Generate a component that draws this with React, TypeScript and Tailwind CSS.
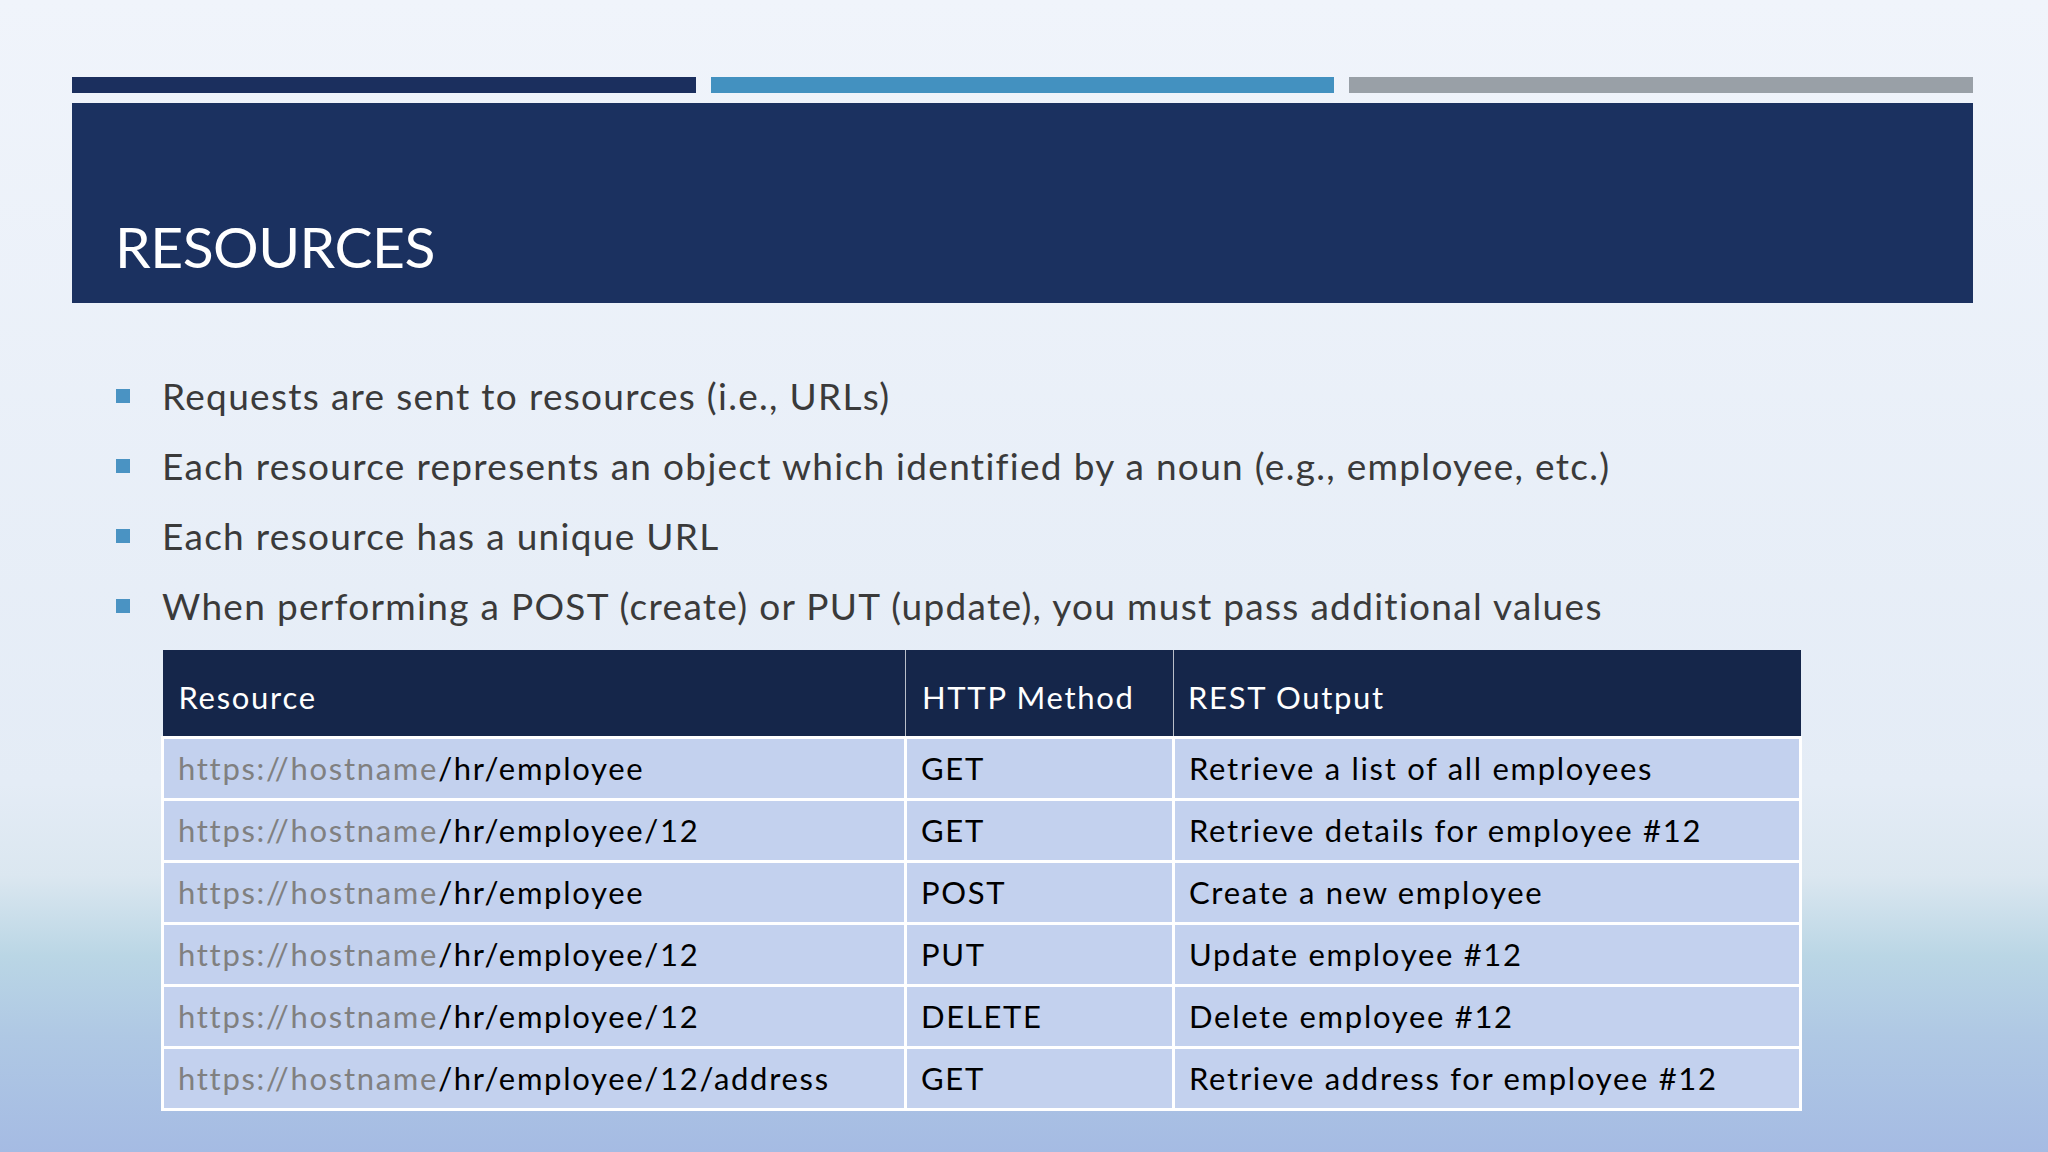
import React from "react";

const bullets = [
  "Requests are sent to resources (i.e., URLs)",
  "Each resource represents an object which identified by a noun (e.g., employee, etc.)",
  "Each resource has a unique URL",
  "When performing a POST (create) or PUT (update), you must pass additional values",
];

const rows = [
  { path: "/hr/employee", method: "GET", output: "Retrieve a list of all employees" },
  { path: "/hr/employee/12", method: "GET", output: "Retrieve details for employee #12" },
  { path: "/hr/employee", method: "POST", output: "Create a new employee" },
  { path: "/hr/employee/12", method: "PUT", output: "Update employee #12" },
  { path: "/hr/employee/12", method: "DELETE", output: "Delete employee #12" },
  { path: "/hr/employee/12/address", method: "GET", output: "Retrieve address for employee #12" },
];

const App: React.FC = () => {
  return (
    <div className="w-[2048px] h-[1152px] overflow-hidden font-['Lato',sans-serif] bg-[linear-gradient(180deg,#f0f4fb_0%,#e4ecf6_68%,#dbe7f0_76%,#bad6e5_83%,#afc8e4_90%,#a5bbe3_100%)]">
      <div className="ml-[72px] w-[1901px] pt-[77px]">
        {/* top accent bars */}
        <div className="flex gap-[15px] h-[16px]">
          <div className="flex-1 bg-[#1b2f5e]" />
          <div className="flex-1 bg-[#4391c0]" />
          <div className="flex-1 bg-[#99a0a7]" />
        </div>

        {/* title */}
        <div className="mt-[10px] h-[200px] bg-[#1b3160] flex items-end pl-[43px] pb-[28px]">
          <h1 className="text-white text-[57px] leading-none tracking-[-0.5px]">RESOURCES</h1>
        </div>

        {/* bullets */}
        <ul className="mt-[58px] ml-[44px]">
          {bullets.map((b) => (
            <li key={b} className="flex items-center h-[70px]">
              <span className="w-[14px] h-[14px] bg-[#4a93c3] mr-[32px] shrink-0" />
              <span className="text-[#3a3a3a] text-[37px] tracking-[1.3px] whitespace-nowrap">{b}</span>
            </li>
          ))}
        </ul>

        {/* table */}
        <table className="mt-[9px] ml-[89px] w-[1638px] border-collapse text-[31px] tracking-[1.7px] table-fixed">
          <colgroup>
            <col className="w-[743px]" />
            <col className="w-[268px]" />
            <col className="w-[627px]" />
          </colgroup>
          <thead>
            <tr className="h-[87px] bg-[#15264a] text-white">
              <th className="text-left font-normal pl-[16px] border-r border-white/70 pt-[8px]">Resource</th>
              <th className="text-left font-normal pl-[16px] border-r border-white/70 pt-[8px] whitespace-nowrap">HTTP Method</th>
              <th className="text-left font-normal pl-[14px] pt-[8px]">REST Output</th>
            </tr>
          </thead>
          <tbody>
            {rows.map((r, i) => (
              <tr key={i} className="h-[62px] bg-[#c3d1ee] text-black">
                <td className="border-[3px] border-white pl-[14px] whitespace-nowrap">
                  <span className="text-[#808080]">https://hostname</span>
                  {r.path}
                </td>
                <td className="border-[3px] border-white pl-[14px]">{r.method}</td>
                <td className="border-[3px] border-white pl-[14px] whitespace-nowrap">{r.output}</td>
              </tr>
            ))}
          </tbody>
        </table>
      </div>
    </div>
  );
};

export default App;
